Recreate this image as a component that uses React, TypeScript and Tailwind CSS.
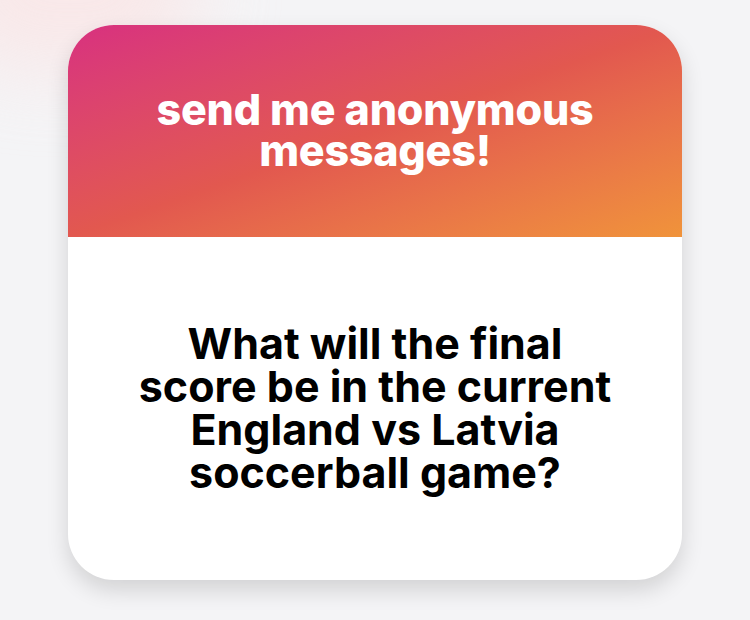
export default function App() {
  return (
    <div className="relative w-[750px] h-[620px] overflow-hidden bg-[#f4f4f6] font-['Inter','Liberation_Sans',sans-serif]">
      <div className="absolute -left-[60px] -top-[90px] w-[260px] h-[160px] rounded-full bg-[#fbe3e3] blur-2xl opacity-70" />
      <div className="relative pt-[25px] pl-[68px]">
        <div className="w-[614px] h-[555px] rounded-[46px] overflow-hidden bg-white flex flex-col shadow-[0_10px_22px_rgba(0,0,0,0.14)]">
          <div className="h-[212px] flex items-center justify-center bg-gradient-to-br from-[#d8307f] via-[#e2584f] to-[#f0933a]">
            <h1 className="text-white text-center text-[43px] leading-[41px] font-extrabold tracking-[-0.005em] pb-[2px]">
              send me anonymous
              <br />
              messages!
            </h1>
          </div>
          <div className="flex-1 flex items-center justify-center">
            <p className="text-black text-center text-[43px] leading-[43px] font-bold pb-[2px]">
              What will the final
              <br />
              score be in the current
              <br />
              England vs Latvia
              <br />
              soccerball game?
            </p>
          </div>
        </div>
      </div>
    </div>
  );
}
